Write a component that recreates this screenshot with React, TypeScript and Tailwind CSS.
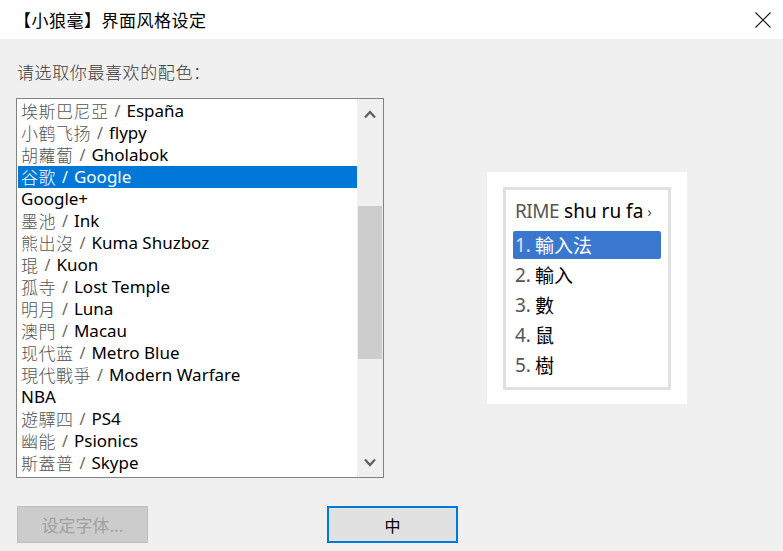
import React from "react";

const items: [string | null, string][] = [
  ["埃斯巴尼亞", "España"],
  ["小鹤飞扬", "flypy"],
  ["胡蘿蔔", "Gholabok"],
  ["谷歌", "Google"],
  [null, "Google+"],
  ["墨池", "Ink"],
  ["熊出沒", "Kuma Shuzboz"],
  ["琨", "Kuon"],
  ["孤寺", "Lost Temple"],
  ["明月", "Luna"],
  ["澳門", "Macau"],
  ["现代蓝", "Metro Blue"],
  ["現代戰爭", "Modern Warfare"],
  [null, "NBA"],
  ["遊驛四", "PS4"],
  ["幽能", "Psionics"],
  ["斯蓋普", "Skype"],
];

const cjk = { fontFamily: '"Noto Sans CJK SC", sans-serif' };
const lat = { fontFamily: '"Noto Sans", "Noto Sans CJK SC", sans-serif' };

export default function App() {
  return (
    <div className="w-[783px] h-[551px] flex flex-col bg-[#f0f0f0] overflow-hidden">
      <div className="h-[39px] bg-white flex items-center justify-between pl-[14px] pr-[12px] shrink-0">
        <span className="text-[17px] tracking-[0.5px] text-black leading-[20px]" style={cjk}>
          【小狼毫】界面风格设定
        </span>
        <svg width="16" height="16" viewBox="0 0 16 16">
          <path d="M0.5 0.5 L15.5 15.5 M15.5 0.5 L0.5 15.5" stroke="#111" strokeWidth="1.1" />
        </svg>
      </div>
      <div className="flex-1 flex flex-col pl-[16px]">
        <div className="mt-[22px] h-[22px] flex items-center pl-[1px] text-[17px] leading-[22px] tracking-[0.6px] text-[#3a3a3a] font-light" style={cjk}>
          请选取你最喜欢的配色：
        </div>
        <div className="mt-[15px] flex items-center">
          <div className="w-[368px] h-[380px] border border-[#828282] bg-white flex">
            <div className="flex-1 flex flex-col pt-[1px] pl-[1px] overflow-hidden">
              {items.map(([zh, en], i) => (
                <div
                  key={i}
                  className={
                    "h-[22px] shrink-0 flex items-center pl-[3px] whitespace-nowrap leading-[22px] " +
                    (i === 3 ? "bg-[#0078d7] text-white" : "text-black")
                  }
                >
                  {zh && (
                    <span
                      className={"text-[17px] leading-[22px] tracking-[0.5px] font-light " + (i === 3 ? "text-white" : "text-[#555]")}
                      style={cjk}
                    >
                      {zh}
                    </span>
                  )}
                  {zh && (
                    <span className={"text-[16px] leading-[22px] mx-[6px] " + (i === 3 ? "text-white" : "text-[#666]")} style={lat}>
                      /
                    </span>
                  )}
                  <span className="text-[17px] leading-[22px]" style={lat}>
                    {en}
                  </span>
                </div>
              ))}
            </div>
            <div className="w-[26px] bg-[#f0f0f0] flex flex-col items-center">
              <div className="h-[30px] w-full flex items-center justify-center">
                <svg width="12" height="9" viewBox="0 0 12 9">
                  <path d="M1 7.5 L6 2 L11 7.5" stroke="#606060" strokeWidth="2.2" fill="none" />
                </svg>
              </div>
              <div className="h-[77px]" />
              <div className="w-[24px] h-[153px] bg-[#cdcdcd]" />
              <div className="flex-1" />
              <div className="h-[30px] w-full flex items-center justify-center">
                <svg width="12" height="9" viewBox="0 0 12 9">
                  <path d="M1 1.5 L6 7 L11 1.5" stroke="#606060" strokeWidth="2.2" fill="none" />
                </svg>
              </div>
            </div>
          </div>
          <div className="ml-[103px] w-[200px] h-[232px] bg-white pt-[15px] pl-[16px]">
            <div className="w-[168px] h-[203px] border-[3px] border-[#e0e0e0] flex flex-col px-[7px]">
              <div className="mt-[7px] h-[28px] flex items-center whitespace-nowrap text-[19px] leading-[28px] pl-[2px]" style={lat}>
                <span className="text-[#555] tracking-[-0.5px]">RIME</span>
                <span className="text-black ml-[5px]">shu ru fa</span>
                <span className="text-[#555] ml-[4px] text-[15px]">›</span>
              </div>
              <div className="mt-[5px] h-[30px] py-[1px]">
                <div className="h-full rounded-[2px] bg-[#3a78d0] flex items-center pl-[2px] text-[19px] leading-[28px]">
                  <span className="text-[#dbe6f7]" style={lat}>1.</span>
                  <span className="text-white ml-[4px]" style={cjk}>輸入法</span>
                </div>
              </div>
              {[
                ["2.", "輸入"],
                ["3.", "數"],
                ["4.", "鼠"],
                ["5.", "樹"],
              ].map(([n, t]) => (
                <div key={n} className="h-[30px] flex items-center pl-[2px] text-[19px] leading-[30px]">
                  <span className="text-[#555]" style={lat}>{n}</span>
                  <span className="text-black ml-[4px]" style={cjk}>{t}</span>
                </div>
              ))}
            </div>
          </div>
        </div>
        <div className="mt-[28px] flex items-center">
          <div className="ml-[1px] w-[131px] h-[37px] bg-[#cccccc] border border-[#bfbfbf] flex items-center justify-center text-[17px] leading-[22px] text-[#a0a0a0]" style={cjk}>
            设定字体...
          </div>
          <div className="ml-[179px] w-[131px] h-[37px] bg-[#e1e1e1] border-2 border-[#0078d7] flex items-center justify-center text-[16px] leading-[22px] text-black" style={cjk}>
            中
          </div>
        </div>
      </div>
    </div>
  );
}
